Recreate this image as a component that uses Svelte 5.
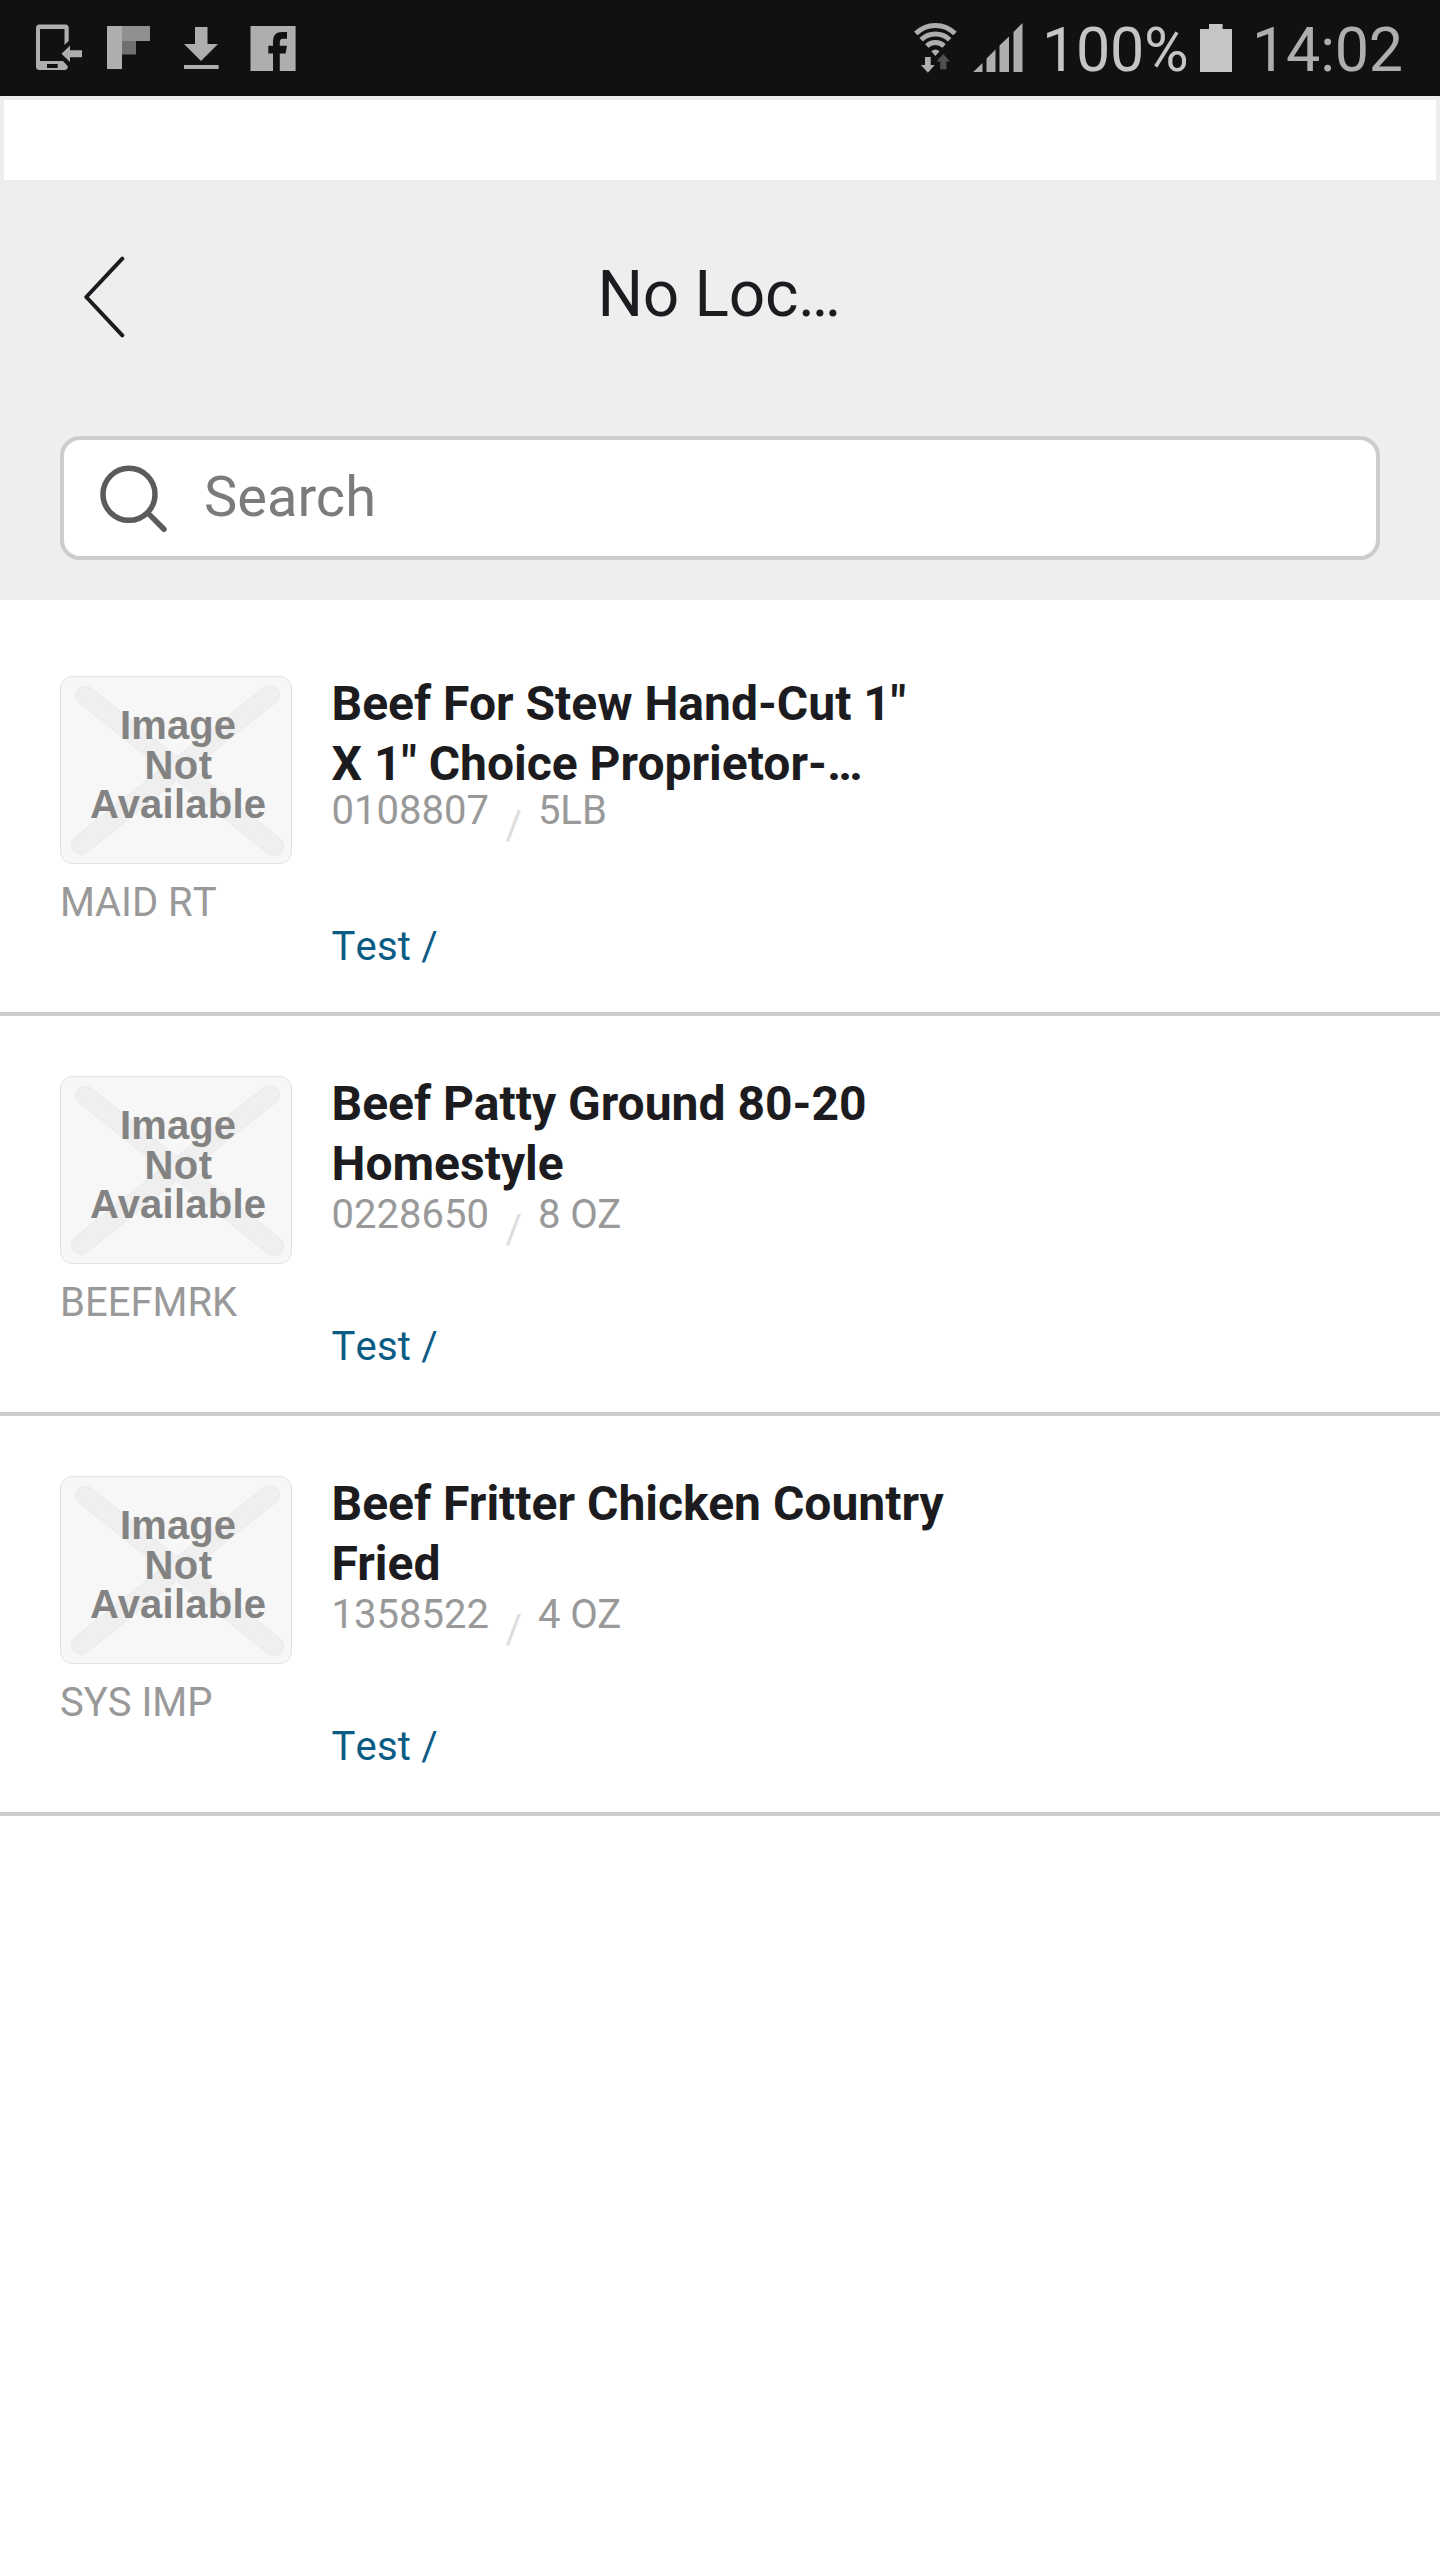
<script>
  const items = [
    { brand: 'MAID RT', title: ['Beef For Stew Hand-Cut 1"', 'X 1" Choice Proprietor-…'], code: '0108807', size: '5LB', clipped: true },
    { brand: 'BEEFMRK', title: ['Beef Patty Ground 80-20', 'Homestyle'], code: '0228650', size: '8 OZ', clipped: false },
    { brand: 'SYS IMP', title: ['Beef Fritter Chicken Country', 'Fried'], code: '1358522', size: '4 OZ', clipped: false }
  ];
</script>

<div class="screen">
  <div class="status">
    <div class="group notices">
      <svg width="46" height="96" viewBox="36 0 46 96" fill="#aeaeae">
        <path fill-rule="evenodd" d="M39.5 24.5H65.5Q68.7 24.5 68.7 28V41L64.5 45V29H40V61H63L68 66.500Q67.500 70 64.500 70H39.500Q36 70 36 66.500V28Q36 24.500 39.500 24.500ZM47 64V68H57.700V64Z" />
        <path d="M61.500 53.700L70 45.500V50.200H82V57.200H70V62Z" />
      </svg>
      <svg width="43" height="96" viewBox="107 0 43 96">
        <path fill="#aeaeae" d="M107 26H122V69H107Z" />
        <path fill="#909090" d="M122 26H150V41H122Z" />
        <path fill="#707070" d="M122 41H136V54.500H122Z" />
      </svg>
      <svg width="35" height="96" viewBox="184 0 35 96" fill="#aeaeae">
        <path d="M195 27H207.500V44H218L201 61L184 44H195ZM184 65H218.600V69H184Z" />
      </svg>
      <svg width="46" height="96" viewBox="250 0 46 96" fill="#aeaeae">
        <path d="M250.500 26H295.600V71H279.800V53.500H285.600L287 45.700H279.800V42Q279.800 38.700 283 38.700H287V32H282Q273 32 273 41V45.700H268.300V53.500H273V71H250.500Z" />
      </svg>
    </div>
    <div class="group system">
      <svg width="44" height="96" viewBox="914 0 44 96">
        <g fill="none" stroke="#aeaeae" stroke-width="5">
          <path d="M915.800 33.600A27.500 27.500 0 0 1 955 33.600" />
          <path d="M921.200 39.700A20.500 20.500 0 0 1 949.600 39.700" />
          <path d="M926.800 46A12.500 12.500 0 0 1 944 46" />
        </g>
        <path fill="#aeaeae" d="M931.300 51.300Q935.400 47.500 939.500 51.300L935.400 56ZM925 57H930.700V65H934.700L927.900 72.700L921 65H925Z" />
        <path fill="#505050" d="M943.300 54L950 61.500H946.400V69.300H940.200V61.500H936.500Z" />
      </svg>
      <svg class="signal" width="50" height="96" viewBox="972.500 0 50 96" fill="#aeaeae">
        <path d="M972.700 72L982 63V72ZM986 72V58.500L995 49.500V72ZM999 72V45.500L1008.500 36.500V72ZM1013 72V32L1022 23V72Z" />
      </svg>
      <span class="percent">100%</span>
      <svg width="32" height="96" viewBox="1200 0 32 96" fill="#c5c5c5">
        <path d="M1200 29H1209V24H1222.600V29H1232V72H1200Z" />
      </svg>
      <span class="clock">14:02</span>
    </div>
  </div>

  <header>
    <div class="strip"></div>
    <div class="nav">
      <svg class="back" width="42" height="84" viewBox="0 0 42 84" fill="none" stroke="#1c1c20" stroke-width="4" stroke-linecap="round" stroke-linejoin="round">
        <path d="M38.300 3.700L2.300 42L38.300 80.300" />
      </svg>
      <h1>No Loc…</h1>
    </div>
    <div class="search">
      <svg width="68" height="68" viewBox="0 0 68 68" fill="none" stroke="#5b5b5b" stroke-width="5.500" stroke-linecap="round">
        <circle cx="29" cy="30.300" r="26" />
        <path d="M48.500 49.600L64 65.200" />
      </svg>
      <span>Search</span>
    </div>
  </header>

  <main>
    {#each items as item}
      <article>
        <div class="media">
          <svg class="thumb" width="232" height="188" viewBox="0 0 232 188">
            <rect x="0.500" y="0.500" width="231" height="187" rx="12" fill="#f7f7f7" stroke="#e2e2e2" />
            <g stroke-linecap="round">
              <path stroke="#e5e5e5" stroke-width="19.600" d="M210 18.700L20.700 169M25.300 19.700L214.300 170.300" />
              <path stroke="#efefef" stroke-width="18.600" d="M210 18.700L20.700 169M25.300 19.700L214.300 170.300" />
            </g>
            <g class="missing">
              <text x="60" y="63.400" textLength="116">Image</text>
              <text x="84.500" y="102.500" textLength="67.500">Not</text>
              <text x="30" y="142" textLength="176">Available</text>
            </g>
          </svg>
          <p>{item.brand}</p>
        </div>
        <div class="info">
          <h2>{#each item.title as line}<span>{line}</span>{/each}</h2>
          <div class="meta" class:clipped={item.clipped}>
            <span>{item.code}</span>
            <span class="slash">/</span>
            <span>{item.size}</span>
          </div>
          <p class="link">Test /</p>
        </div>
      </article>
    {/each}
  </main>
</div>

<style>
  :global(body) {
    margin: 0;
    background: #fff;
  }
  .screen {
    width: 1440px;
    height: 2560px;
    overflow: hidden;
    background: #fff;
    font-family: Roboto, sans-serif;
    color: #1c1c20;
  }
  svg {
    display: block;
    flex: none;
  }
  h1, h2, p {
    margin: 0;
    font-weight: 400;
  }
  .status {
    height: 96px;
    box-sizing: border-box;
    padding: 0 37px 0 36px;
    background: #111;
    display: flex;
    justify-content: space-between;
  }
  .group {
    display: flex;
    align-items: flex-start;
  }
  .notices svg:nth-child(2) { margin-left: 25px; }
  .notices svg:nth-child(3) { margin-left: 34px; }
  .notices svg:nth-child(4) { margin-left: 31px; }
  .signal { margin-left: 14.5px; }
  .percent, .clock {
    font-size: 61px;
    line-height: 100px;
    white-space: nowrap;
  }
  .percent {
    width: 148px;
    margin: 0 10px 0 19.500px;
    color: #c5c5c5;
    letter-spacing: -0.3px;
  }
  .clock {
    width: 151px;
    margin-left: 20px;
    color: #aeaeae;
    letter-spacing: -0.2px;
  }
  header {
    height: 504px;
    box-sizing: border-box;
    padding: 4px 4px 0;
    background: #eee;
  }
  .strip {
    height: 80px;
    background: #fff;
  }
  .nav {
    height: 234px;
    display: grid;
    grid-template-columns: 1fr auto 1fr;
    align-items: center;
  }
  .back {
    margin-left: 80px;
  }
  h1 {
    font-size: 64px;
    line-height: 76px;
    margin-bottom: 4px;
    padding-right: 2px;
    letter-spacing: -0.3px;
  }
  .search {
    height: 124px;
    box-sizing: border-box;
    margin: 22px 56px 0;
    border: 4px solid #ccc;
    border-radius: 20px;
    background: #fff;
    display: flex;
    align-items: center;
    padding: 0 36px;
    gap: 36px;
  }
  .search span {
    font-size: 56px;
    line-height: 66px;
    margin-bottom: 2px;
    color: #7b7b7b;
  }
  main {
    padding-top: 16px;
  }
  article {
    height: 400px;
    box-sizing: border-box;
    padding: 58px 60px 43px;
    border-bottom: 4px solid #ccc;
    display: flex;
    gap: 39.5px;
  }
  .media {
    padding-top: 2px;
    width: 232px;
    flex: none;
  }
  .media p {
    margin-top: 17px;
    font-size: 40px;
    line-height: 44px;
    font-kerning: none;
    color: #999;
  }
  .missing {
    font: bold 40px "Liberation Sans", sans-serif;
    fill: #838383;
  }
  .info {
    display: flex;
    flex-direction: column;
  }
  h2 {
    font-size: 48px;
    line-height: 60px;
    font-weight: 700;
  }
  h2 span {
    display: block;
    white-space: nowrap;
  }
  .meta {
    margin-top: 4px;
    display: flex;
    align-items: flex-start;
    font-size: 40px;
    line-height: 34px;
    color: #999;
  }
  .meta.clipped {
    margin-top: 0;
  }
  .slash {
    padding-top: 15px;
    margin: 0 16px 0 16.5px;
    color: #ddd;
  }
  .link {
    margin-top: auto;
    font-size: 40px;
    line-height: 44px;
    font-kerning: none;
    letter-spacing: 0.2px;
    color: #0a5c85;
  }
</style>
